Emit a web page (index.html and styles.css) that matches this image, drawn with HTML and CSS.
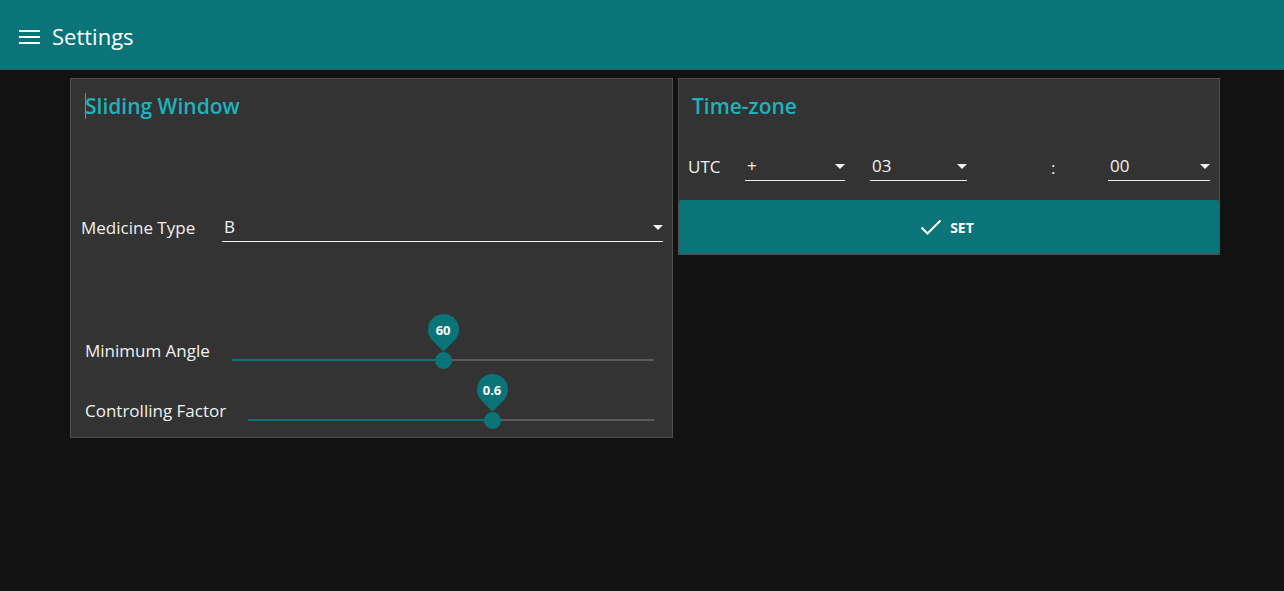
FILE: index.html
```html
<!DOCTYPE html>
<html>
<head>
<meta charset="utf-8">
<link rel="stylesheet" href="styles.css">
</head>
<body>
<header class="topbar">
  <svg class="menu-icon" width="21" height="14" viewBox="0 0 21 14">
    <rect x="0" y="0" width="21" height="2" fill="#fff"/>
    <rect x="0" y="6" width="21" height="2" fill="#fff"/>
    <rect x="0" y="12" width="21" height="2" fill="#fff"/>
  </svg>
  <span class="topbar-title">Settings</span>
</header>
<main class="content">
  <section class="card card-left">
    <h2 class="card-title"><span class="caret"></span>Sliding Window</h2>
    <div class="field-row medicine-row">
      <span class="label">Medicine Type</span>
      <div class="select select-wide">
        <span class="select-value">B</span>
        <span class="select-arrow"></span>
      </div>
    </div>
    <div class="slider-row first-slider">
      <span class="label">Minimum Angle</span>
      <div class="slider">
        <div class="track-fill" style="width:50%"></div>
        <div class="thumb" style="left:50%">
          <div class="pin"><span class="pin-text">60</span></div>
        </div>
      </div>
    </div>
    <div class="slider-row second-slider">
      <span class="label">Controlling Factor</span>
      <div class="slider">
        <div class="track-fill" style="width:60%"></div>
        <div class="thumb" style="left:60%">
          <div class="pin"><span class="pin-text">0.6</span></div>
        </div>
      </div>
    </div>
  </section>
  <section class="card card-right">
    <h2 class="card-title tz-title">Time-zone</h2>
    <div class="tz-row">
      <span class="label utc">UTC</span>
      <div class="select select-sign">
        <span class="select-value">+</span>
        <span class="select-arrow"></span>
      </div>
      <div class="select select-hour">
        <span class="select-value">03</span>
        <span class="select-arrow"></span>
      </div>
      <span class="colon">:</span>
      <div class="select select-min">
        <span class="select-value">00</span>
        <span class="select-arrow"></span>
      </div>
    </div>
    <button class="set-btn">
      <svg class="check" width="22" height="17" viewBox="0 0 22 17">
        <path d="M1.5 8.5 L7.5 14.5 L20.5 1.5" fill="none" stroke="#fff" stroke-width="2"/>
      </svg>
      <span>SET</span>
    </button>
  </section>
</main>
</body>
</html>
```

FILE: styles.css
```css
* { box-sizing: border-box; }
html, body { margin: 0; padding: 0; }
body {
  background: #121212;
  font-family: "Open Sans", "Noto Sans", sans-serif;
  color: #f2f2f2;
  width: 1284px;
  height: 591px;
  overflow: hidden;
}
.topbar {
  height: 70px;
  background: #0a7479;
  display: flex;
  align-items: center;
  padding-left: 19px;
}
.menu-icon { display: block; margin-top: 3px; }
.topbar-title {
  margin-left: 12px;
  font-size: 22px;
  color: #fff;
  margin-top: 1px;
}
.content {
  display: flex;
  align-items: flex-start;
  gap: 5px;
  padding: 8px 0 0 70px;
}
.card {
  background: #333333;
  border: 1px solid #4e4e4e;
}
.card-left {
  width: 603px;
  height: 360px;
  padding: 0 9px 0 10px;
}
.card-right {
  width: 542px;
  height: 177px;
}
.card-title {
  margin: 0;
  font-size: 21px;
  font-weight: 600;
  line-height: 30px;
  color: #1ab3bf;
  padding-top: 12px;
  position: relative;
}
.card-left .card-title { padding-left: 4px; }
.caret {
  position: absolute;
  left: 4px;
  top: 14px;
  width: 1px;
  height: 26px;
  background: #1ab3bf;
}
.tz-title { padding-left: 13px; }
.label { font-size: 17px; white-space: nowrap; color: #f0f0f0; }
.field-row { display: flex; align-items: flex-end; }
.medicine-row { margin-top: 91px; }
.medicine-row .label { margin-bottom: 3px; width: 141px; }
.select {
  position: relative;
  height: 30px;
  border-bottom: 1px solid #f0f0f0;
  display: flex;
  align-items: center;
  padding-left: 2px;
  font-size: 17px;
}
.select-wide { flex: 1; }
.select-value { margin-top: 0; }
.select-arrow {
  position: absolute;
  right: 0;
  top: 13px;
  width: 0; height: 0;
  border-left: 5px solid transparent;
  border-right: 5px solid transparent;
  border-top: 5px solid #f0f0f0;
}
.slider-row {
  display: flex;
  align-items: center;
  height: 30px;
  padding-left: 4px;
  padding-right: 9px;
}
.first-slider { margin-top: 93px; }
.second-slider { margin-top: 30px; }
.slider-row .label { margin-right: 22px; }
.slider {
  flex: 1;
  position: relative;
  height: 2px;
  margin-top: 20px;
  background: #5a5a5a;
}
.track-fill {
  height: 2px;
  background: #0a7479;
}
.thumb {
  position: absolute;
  top: -7px;
  width: 17px;
  height: 17px;
  margin-left: -8px;
  border-radius: 50%;
  background: #0a7479;
}
.pin {
  position: absolute;
  left: -7px;
  top: -38px;
  width: 31px;
  height: 31px;
  border-radius: 50% 50% 0 50%;
  transform: rotate(45deg);
  background: #0a7479;
  display: flex;
  align-items: center;
  justify-content: center;
}
.pin-text {
  transform: rotate(-45deg);
  font-size: 13px;
  font-weight: 700;
  color: #fff;
}
.tz-row {
  display: flex;
  align-items: flex-end;
  margin-top: 30px;
  padding-left: 9px;
}
.utc { width: 57px; margin-bottom: 3px; }
.select-sign { width: 100px; }
.select-hour { width: 97px; margin-left: 25px; }
.colon { font-size: 17px; margin-left: 84px; width: 57px; margin-bottom: 2px; }
.select-min { width: 102px; }
.set-btn {
  display: flex;
  align-items: center;
  justify-content: center;
  gap: 8px;
  width: 540px;
  height: 54px;
  margin-top: 19px;
  border: none;
  border-radius: 2px;
  background: #0a7479;
  color: #fff;
  font-family: "Open Sans", "Noto Sans", sans-serif;
  font-size: 14px;
  font-weight: 700;
  padding: 0;
  padding-right: 4px;
}
.check { display: block; }
```
